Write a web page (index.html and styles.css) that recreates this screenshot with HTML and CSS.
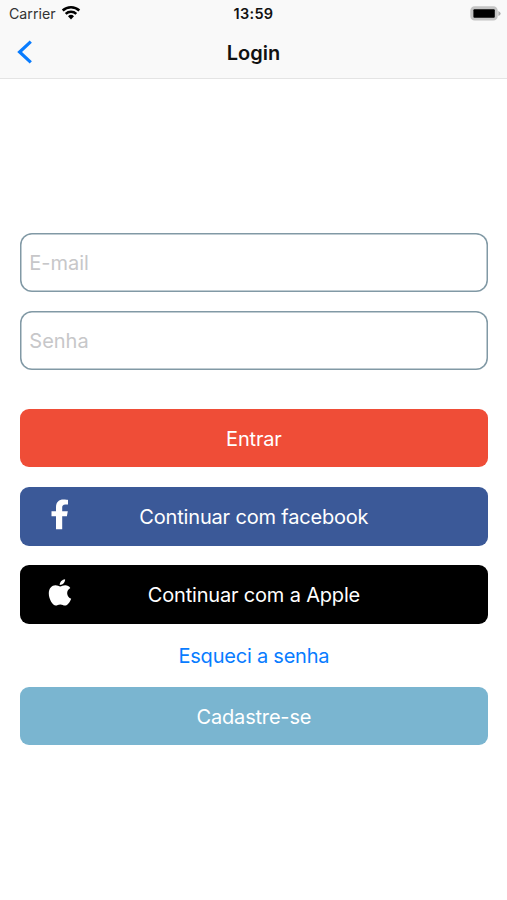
FILE: index.html
```html
<!DOCTYPE html>
<html lang="pt-BR">
<head>
<meta charset="utf-8">
<title>Login</title>
<link rel="stylesheet" href="styles.css">
</head>
<body>
<header class="top">
  <div class="status">
    <div class="carrier"><span class="carrier-name">Carrier</span>
      <svg class="wifi" width="20" height="16" viewBox="0 0 20 16">
        <path d="M1.700 5.500a12 12 0 0 1 16.600 0M4.700 8.800a7.700 7.700 0 0 1 10.600 0" fill="none" stroke="#000" stroke-width="2.500"/>
        <path d="M10 14.400l-3-3.100a4.300 4.300 0 0 1 6 0z"/>
      </svg>
    </div>
    <time class="clock">13:59</time>
    <svg class="battery" width="31" height="15" viewBox="0 0 31 15">
      <rect x="1.200" y="1.200" width="25.600" height="12.400" rx="3.400" fill="#c4c4c4" stroke="#c4c4c4" stroke-width="1.800"/>
      <rect x="3.400" y="3.200" width="21.400" height="8.600" rx="1"/>
      <path d="M28.400 5v5q2.200-1 2.200-2.500t-2.200-2.500z" fill="#aaa"/>
    </svg>
  </div>
  <nav class="nav">
    <svg class="back" width="16" height="26" viewBox="0 0 16 26"><path d="M13.800 2.600L2.600 13l11.200 10.400" fill="none" stroke="#087cff" stroke-width="3.200"/></svg>
    <h1 class="title">Login</h1>
  </nav>
</header>
<main class="form">
  <input class="field" type="email" placeholder="E-mail">
  <input class="field" type="password" placeholder="Senha">
  <button class="button enter"><span class="label-enter">Entrar</span></button>
  <button class="button facebook">
    <svg class="icon" width="18" height="31" viewBox="0 0 18 31"><path d="M5 30.300V17.200H.5v-5H5V8.300C5 3.200 8 .6 12.400.6c2 0 4.600.3 4.600.3v4.700h-2.600c-2.500 0-3.200 1.400-3.200 3v3.600h5.600l-.9 5h-4.700v13.100z" fill="#fff"/></svg>
    <span class="label-facebook">Continuar com facebook</span>
  </button>
  <button class="button apple">
    <svg class="icon" width="24" height="28" viewBox="0 0 24 28"><path d="M12.300 7.500c1.200 0 2.700-1.200 5-1.200 2 0 3.900 1 5 2.600-4.700 2.800-3.800 8.800.9 10.800-1 2.800-3.700 6.900-6.200 6.900-1.800 0-2.500-1.100-4.700-1.100s-3 1.100-4.600 1.100C4.800 26.600.8 20.300.8 14.600c0-5.300 3.100-8.300 6.600-8.300 2.100 0 3.700 1.200 4.900 1.200zM11.700 5.900c0-2.800 2.400-5.500 5.400-5.700.3 3-2.500 5.900-5.400 5.700z" fill="#fff"/></svg>
    <span class="label-apple">Continuar com a Apple</span>
  </button>
  <a class="forgot" href="#">Esqueci a senha</a>
  <button class="button signup"><span class="label-signup">Cadastre-se</span></button>
</main>
</body>
</html>
```
FILE: styles.css
```css
* { box-sizing: border-box; }
body {
  margin: 0;
  background: #fff;
  color: #111;
  font-family: Inter, "Liberation Sans", sans-serif;
  font-size: 20px;
}
.top {
  height: 79px;
  background: #f9f9f9;
  border-bottom: 1px solid #e4e4e4;
}
.status {
  display: grid;
  grid-template-columns: 1fr auto 1fr;
  align-items: center;
  height: 27px;
  padding: 0 6px;
}
.carrier { display: flex; align-items: center; gap: 5px; padding-left: 3px; font-size: 14.200px; color: #333; }
.wifi { margin-top: -2px; }
.clock { font-size: 14.500px; font-weight: 600; letter-spacing: .3px; }
.battery { justify-self: end; }
.nav {
  display: grid;
  grid-template-columns: 1fr auto 1fr;
  align-items: center;
  height: 50px;
  padding: 0 17px;
}
.title { margin: 0; padding-top: 1px; font-size: 20px; font-weight: 600; }
.form {
  display: flex;
  flex-direction: column;
  padding: 154.200px 19.500px 0 20.300px;
}
.field {
  height: 58.600px;
  margin: 0 0 19.500px;
  padding: 1px 8px 0 9px;
  border: 0;
  border-radius: 12px;
  outline: none;
  background: #fff;
  box-shadow: inset 0 0 0 1.500px #8199a5;
  font: inherit;
}
.field::placeholder { color: #c7c7c9; opacity: 1; }
.button {
  display: grid;
  grid-template-columns: 80px 1fr 80px;
  align-items: center;
  height: 58.600px;
  margin: 0 0 19.500px;
  padding: 0;
  border: 0;
  border-radius: 9px;
  color: #fff;
  font: inherit;
  letter-spacing: -.18px;
}
.button span { grid-column: 2; padding-top: 2px; white-space: nowrap; }
.icon { grid-row: 1; justify-self: center; margin-top: -3px; }
.enter { margin-top: 19.500px; background: #ef4d37; }
.facebook { background: #3b5998; }
.apple { background: #000; }
.forgot {
  height: 24px;
  margin-bottom: 19.500px;
  padding-top: 1px;
  color: #087cff;
  letter-spacing: -.22px;
  line-height: 24px;
  text-align: center;
  text-decoration: none;
}
.signup { background: #7ab5d0; }
```
